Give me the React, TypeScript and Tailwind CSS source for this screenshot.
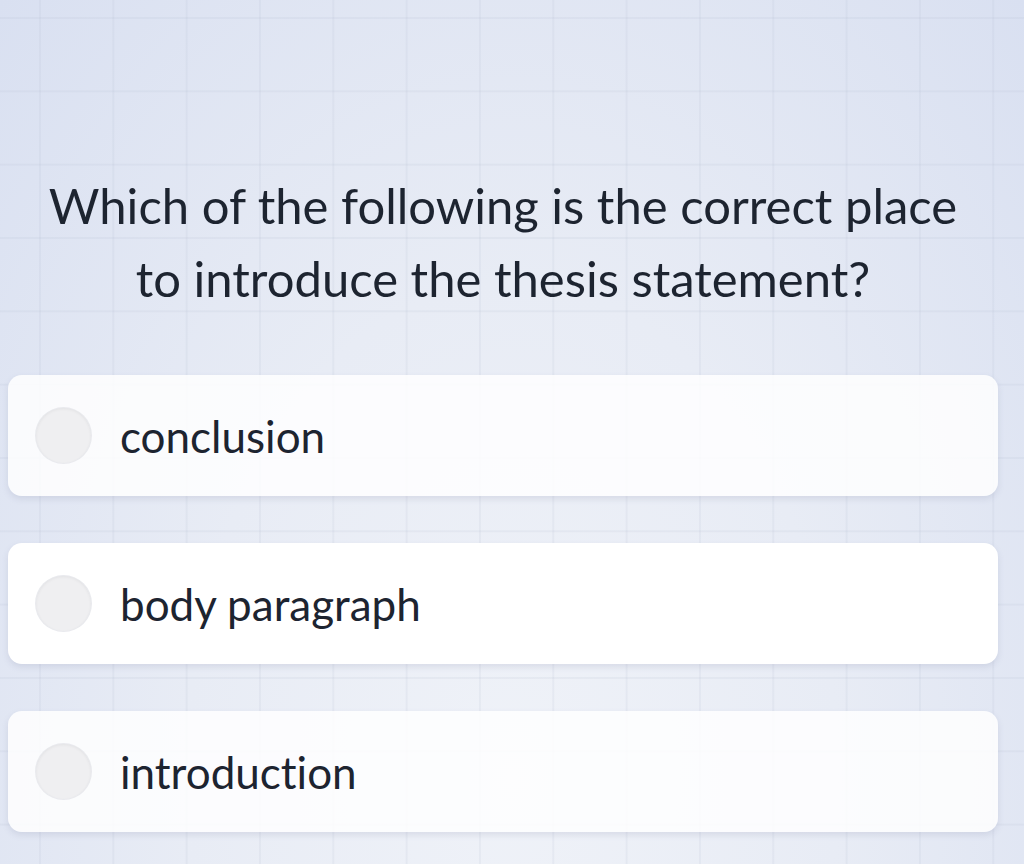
const options = ["conclusion", "body paragraph", "introduction"];

function Radio() {
  return (
    <span className="block h-[55px] w-[55px] shrink-0 rounded-full bg-[#efeff1] shadow-[inset_0_1px_3px_rgba(0,0,0,0.05)] ring-1 ring-[#e9eaee]" />
  );
}

export default function App() {
  return (
    <div
      className="h-[864px] w-full overflow-hidden font-['Lato','Liberation_Sans',sans-serif] text-[#1d2430] [font-variant-ligatures:none] [background-image:linear-gradient(to_right,rgba(170,180,200,0.13)_2px,transparent_2px),linear-gradient(to_bottom,rgba(170,180,200,0.13)_2px,transparent_2px),radial-gradient(ellipse_at_50%_90%,#eff2f8_0%,#e8ecf5_45%,#d9e0f1_100%)] [background-size:73.33px_73.33px,73.33px_73.33px,100%_100%] [background-position:39px_0,0_17px,0_0]"
    >
      <div className="pl-2 pr-[26px] pt-[169px]">
        <h1 className="text-center text-[49px] leading-[73px] font-normal">
          Which of the following is the correct place
          <br />
          to introduce the thesis statement?
        </h1>

        <div className="mt-[60px] flex flex-col gap-[47px]">
          {options.map((opt, i) => (
            <button
              key={opt}
              className={
                "flex h-[121px] w-full items-center gap-[29px] rounded-[14px] pl-7 text-left shadow-[0_3px_6px_rgba(120,130,160,0.18)] " +
                (i === 1 ? "bg-white" : "bg-white/85")
              }
            >
              <Radio />
              <span className="text-[44px] leading-none">{opt}</span>
            </button>
          ))}
        </div>
      </div>
    </div>
  );
}
